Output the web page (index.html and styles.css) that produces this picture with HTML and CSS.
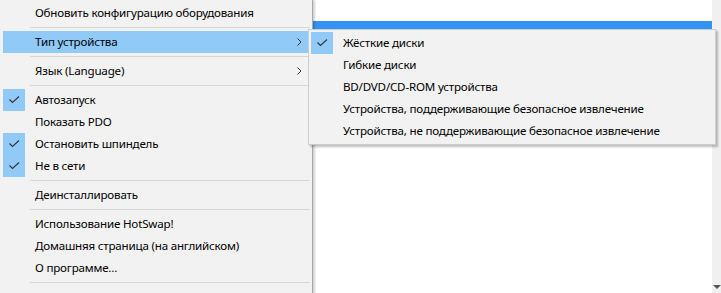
FILE: index.html
```html
<!DOCTYPE html>
<html lang="ru">
<head>
  <meta charset="UTF-8" />
  <title>HotSwap! — меню</title>
  <link rel="stylesheet" href="styles.css">
</head>
<body>
  <!-- Window behind the menus -->
  <div class="window">
    <div class="list">
      <div class="list-row selected"></div>
    </div>
    <div class="scrollbar">
      <span class="scroll-arrow"></span>
    </div>
  </div>

  <!-- Main context menu -->
  <ul class="menu main-menu">
    <li class="item"><span class="mark"></span><span class="label">Обновить конфигурацию оборудования</span></li>
    <li class="sep"></li>
    <li class="item hover"><span class="mark"></span><span class="label">Тип устройства</span>
      <svg class="arrow" width="5" height="8" viewBox="0 0 5 8"><polyline points="0.5,0.5 4,4 0.5,7.5" fill="none" stroke="#333" stroke-width="1"/></svg>
    </li>
    <li class="sep"></li>
    <li class="item"><span class="mark"></span><span class="label">Язык (Language)</span>
      <svg class="arrow" width="5" height="8" viewBox="0 0 5 8"><polyline points="0.5,0.5 4,4 0.5,7.5" fill="none" stroke="#333" stroke-width="1"/></svg>
    </li>
    <li class="sep"></li>
    <li class="item checked"><span class="mark"><svg width="11" height="8" viewBox="0 0 11 8"><polyline points="0.5,3.5 3.5,6.5 10,0.5" fill="none" stroke="#333" stroke-width="1.1"/></svg></span><span class="label">Автозапуск</span></li>
    <li class="item"><span class="mark"></span><span class="label">Показать PDO</span></li>
    <li class="item checked"><span class="mark"><svg width="11" height="8" viewBox="0 0 11 8"><polyline points="0.5,3.5 3.5,6.5 10,0.5" fill="none" stroke="#333" stroke-width="1.1"/></svg></span><span class="label">Остановить шпиндель</span></li>
    <li class="item checked"><span class="mark"><svg width="11" height="8" viewBox="0 0 11 8"><polyline points="0.5,3.5 3.5,6.5 10,0.5" fill="none" stroke="#333" stroke-width="1.1"/></svg></span><span class="label">Не в сети</span></li>
    <li class="sep"></li>
    <li class="item"><span class="mark"></span><span class="label">Деинсталлировать</span></li>
    <li class="sep"></li>
    <li class="item"><span class="mark"></span><span class="label">Использование HotSwap!</span></li>
    <li class="item"><span class="mark"></span><span class="label">Домашняя страница (на английском)</span></li>
    <li class="item"><span class="mark"></span><span class="label">О программе...</span></li>
    <li class="sep"></li>
  </ul>

  <!-- Submenu: device type -->
  <ul class="menu sub-menu">
    <li class="item checked"><span class="mark"><svg width="11" height="8" viewBox="0 0 11 8"><polyline points="0.5,3.5 3.5,6.5 10,0.5" fill="none" stroke="#333" stroke-width="1.1"/></svg></span><span class="label">Жёсткие диски</span></li>
    <li class="item"><span class="mark"></span><span class="label">Гибкие диски</span></li>
    <li class="item"><span class="mark"></span><span class="label">BD/DVD/CD-ROM устройства</span></li>
    <li class="item"><span class="mark"></span><span class="label">Устройства, поддерживающие безопасное извлечение</span></li>
    <li class="item"><span class="mark"></span><span class="label">Устройства, не поддерживающие безопасное извлечение</span></li>
  </ul>
</body>
</html>
```

FILE: styles.css
```css
html,
body {
  margin: 0;
  width: 721px;
  height: 293px;
  overflow: hidden;
}
body {
  position: relative;
  font-family: 'Noto Sans', 'Segoe UI', sans-serif;
  font-size: 11.6px;
  letter-spacing: -0.2px;
  color: #000;
  background: #fff;
}

/* window behind */
.window {
  display: flex;
  height: 293px;
}
.list {
  flex: 1;
  background: #fff;
  padding-top: 21px;
}
.list-row.selected {
  height: 20px;
  background: #3393f5;
}
.scrollbar {
  width: 9px;
  background: #f0f0f0;
  display: flex;
  flex-direction: column;
  justify-content: flex-end;
  align-items: flex-end;
  padding-bottom: 4px;
  box-sizing: border-box;
}
.scroll-arrow {
  width: 0;
  height: 0;
  border-left: 4px solid transparent;
  border-right: 4px solid transparent;
  border-top: 4px solid #555;
}

/* menus */
.menu {
  list-style: none;
  margin: 0;
  position: absolute;
  background: #f2f2f2;
  box-sizing: border-box;
}
.main-menu {
  left: 0;
  top: 0;
  width: 313px;
  height: 300px;
  padding: 2px 2px 0 3px;
  border-right: 1px solid #a8a8a8;
  box-shadow: 2px 0 2px rgba(0, 0, 0, 0.18);
}
.sub-menu {
  left: 308px;
  top: 29px;
  width: 408px;
  padding: 2px;
  border: 1px solid #cccccc;
  box-shadow: 2px 2px 2px rgba(0, 0, 0, 0.25);
}
.item {
  display: flex;
  align-items: center;
  height: 22px;
  position: relative;
}
.item.hover {
  background: #91c9f7;
}
.mark {
  width: 22px;
  height: 22px;
  margin-right: 10px;
  display: flex;
  align-items: center;
  justify-content: center;
}
.checked .mark {
  background: #91c9f7;
}
.label {
  flex: 1;
  white-space: nowrap;
  line-height: 22px;
}
.arrow {
  margin-right: 8px;
}
.sep {
  height: 7px;
  position: relative;
}
.sep::after {
  content: '';
  position: absolute;
  left: 27px;
  right: 0;
  top: 3px;
  height: 1px;
  background: #d7d7d7;
}
```
